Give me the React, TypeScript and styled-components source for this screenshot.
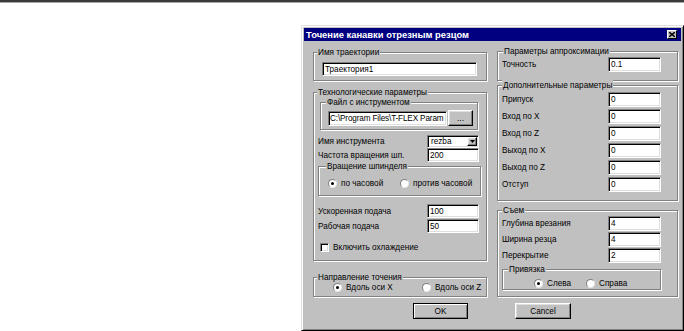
import React from "react";
import styled, { createGlobalStyle, css } from "styled-components";

const Global = createGlobalStyle`
  html, body { margin: 0; padding: 0; background: #fff; }
  body { font-family: "Liberation Sans", Arial, sans-serif; font-size: 8.2px; color: #000; }
  * { box-sizing: border-box; }
`;

const Page = styled.div`
  width: 684px;
  height: 331px;
  display: flex;
  flex-direction: column;
  overflow: hidden;
`;

const TopRule = styled.div`
  flex: none;
  height: 3px;
  border-top: 2px solid #3a3a3a;
  border-bottom: 1px solid #a8a8a8;
`;

const Window = styled.div`
  flex: none;
  margin: 22px 0 0 auto;
  width: 383px;
  height: 306px;
  background: #c0c0c0;
  border: 1px solid;
  border-color: #dfdfdf #000 #000 #dfdfdf;
  box-shadow: inset 1px 1px 0 #fff, inset -1px -1px 0 #808080;
  padding: 2px;
  display: flex;
  flex-direction: column;
`;

const TitleBar = styled.div`
  flex: none;
  height: 13px;
  background: #000080;
  display: flex;
  align-items: center;
  justify-content: space-between;
  padding: 0 4px 0 2px;
`;

const TitleText = styled.span`
  color: #fff;
  font-weight: bold;
  font-size: 9.4px;
  line-height: 13px;
  white-space: nowrap;
`;

const CloseButton = styled.span`
  width: 10px;
  height: 9px;
  background: #c0c0c0;
  border: 1px solid;
  border-color: #fff #000 #000 #fff;
  display: flex;
  align-items: center;
  justify-content: center;
`;

const Body = styled.div`
  display: grid;
  grid-template-columns: 174px 181px;
  column-gap: 10px;
  padding-left: 9px;
  align-items: start;
`;

const Column = styled.div`
  display: flex;
  flex-direction: column;
`;

type BoxProps = { $mt?: number; $ml?: number; $mr?: number; $h: number };

const Group = styled.div<BoxProps>`
  flex: none;
  display: flex;
  flex-direction: column;
  height: ${(p) => p.$h}px;
  margin: ${(p) => p.$mt ?? 0}px ${(p) => p.$mr ?? 0}px 0 ${(p) => p.$ml ?? 0}px;
  border: 1px solid #808080;
  box-shadow: 1px 1px 0 #fff, inset 1px 1px 0 #fff;
`;

const GroupTitle = styled.span<{ $ml?: number }>`
  display: block;
  align-self: flex-start;
  margin: -6px 0 0 ${(p) => p.$ml ?? 3}px;
  padding: 0 1px;
  background: #c0c0c0;
  line-height: 11px;
  white-space: nowrap;
`;

const Row = styled.div<{ $mt?: number; $pl?: number; $pr?: number; $h?: number }>`
  flex: none;
  display: flex;
  align-items: center;
  justify-content: space-between;
  height: ${(p) => p.$h ?? 15}px;
  margin-top: ${(p) => p.$mt ?? 0}px;
  padding: 0 ${(p) => p.$pr ?? 0}px 0 ${(p) => p.$pl ?? 0}px;
`;

const InlineRow = styled(Row)`
  justify-content: flex-start;
`;

const Label = styled.span`
  white-space: nowrap;
  line-height: 11px;
`;

const sunken = css`
  background: #fff;
  border: 1px solid;
  border-color: #808080 #fff #fff #808080;
  box-shadow: inset 1px 1px 0 #000, inset -1px -1px 0 #dfdfdf;
`;

const Field = styled.div<{ $w: number; $h?: number; $tight?: boolean }>`
  ${sunken}
  flex: none;
  width: ${(p) => p.$w}px;
  height: ${(p) => p.$h ?? 15}px;
  padding: 0 ${(p) => (p.$tight ? 1 : 2)}px;
  letter-spacing: ${(p) => (p.$tight ? "-0.15px" : "0")};
  display: flex;
  align-items: center;
  white-space: nowrap;
  overflow: hidden;
  line-height: 11px;
`;

const Combo = styled.div`
  ${sunken}
  flex: none;
  width: 52px;
  height: 13px;
  display: flex;
  align-items: center;
  justify-content: space-between;
  padding: 0 1px 0 3px;
  line-height: 11px;
`;

const raised = css`
  background: #c0c0c0;
  border: 1px solid;
  border-color: #fff #000 #000 #fff;
  box-shadow: inset -1px -1px 0 #808080, inset 1px 1px 0 #dfdfdf;
`;

const ArrowButton = styled.span`
  ${raised}
  width: 10px;
  height: 9px;
  display: flex;
  align-items: center;
  justify-content: center;
`;

const SmallButton = styled.span`
  ${raised}
  flex: none;
  width: 25px;
  height: 16px;
  margin-left: 1px;
  display: flex;
  align-items: center;
  justify-content: center;
  line-height: 11px;
`;

const RadioItem = styled.span<{ $w?: number }>`
  display: flex;
  align-items: center;
  gap: 4px;
  width: ${(p) => (p.$w ? `${p.$w}px` : "auto")};
  flex: none;
  white-space: nowrap;
  line-height: 11px;
`;

const RadioDot = styled.span<{ $on?: boolean }>`
  flex: none;
  width: 9px;
  height: 9px;
  border-radius: 50%;
  background: #fff;
  border: 1px solid;
  border-color: #808080 #e8e8e8 #e8e8e8 #808080;
  display: flex;
  align-items: center;
  justify-content: center;
  ${(p) =>
    p.$on &&
    css`
      &::after {
        content: "";
        width: 3px;
        height: 3px;
        border-radius: 50%;
        background: #000;
      }
    `}
`;

const CheckBox = styled.span`
  ${sunken}
  flex: none;
  width: 9px;
  height: 9px;
  margin-right: 4px;
`;

const ButtonRow = styled.div`
  flex: none;
  display: flex;
  gap: 47px;
  margin-top: 6px;
  padding-left: 109px;
`;

const PushButton = styled.span<{ $w: number; $default?: boolean }>`
  flex: none;
  width: ${(p) => p.$w}px;
  height: 16px;
  background: #c0c0c0;
  border: 1px solid;
  border-color: ${(p) => (p.$default ? "#000" : "#fff #000 #000 #fff")};
  box-shadow: ${(p) =>
    p.$default
      ? "inset 1px 1px 0 #fff, inset -1px -1px 0 #808080"
      : "inset -1px -1px 0 #808080, inset 1px 1px 0 #dfdfdf"};
  display: flex;
  align-items: center;
  justify-content: center;
  line-height: 11px;
`;

const Radio = ({ on, w, children }: { on?: boolean; w?: number; children: React.ReactNode }) => (
  <RadioItem $w={w}>
    <RadioDot $on={on} />
    {children}
  </RadioItem>
);

const FieldRow = ({ label, value, mt }: { label: string; value: string; mt?: number }) => (
  <Row $mt={mt} $pl={4} $pr={16}>
    <Label>{label}</Label>
    <Field $w={53}>{value}</Field>
  </Row>
);

const LeftRow = ({ label, value, mt, h }: { label: string; value: string; mt?: number; h?: number }) => (
  <Row $mt={mt} $pl={4} $pr={7} $h={h ?? 14}>
    <Label>{label}</Label>
    <Field $w={52} $h={h ?? 14}>{value}</Field>
  </Row>
);

export default function App() {
  return (
    <>
      <Global />
      <Page>
        <TopRule />
        <Window>
          <TitleBar>
            <TitleText>Точение канавки отрезным резцом</TitleText>
            <CloseButton>
              <svg width="6" height="5" viewBox="0 0 6 5">
                <path d="M0 0 L6 5 M6 0 L0 5" stroke="#000" strokeWidth="1.4" />
              </svg>
            </CloseButton>
          </TitleBar>
          <Body>
            <Column>
              <Group $mt={11} $h={29}>
                <GroupTitle>Имя траектории</GroupTitle>
                <InlineRow $mt={4} $pl={8} $h={14}>
                  <Field $w={155} $h={14}>Траектория1</Field>
                </InlineRow>
              </Group>
              <Group $mt={11} $h={169}>
                <GroupTitle>Технологические параметры</GroupTitle>
                <Group $mt={4} $ml={6} $mr={8} $h={28}>
                  <GroupTitle $ml={5}>Файл с инструментом</GroupTitle>
                  <InlineRow $mt={2} $pl={7} $h={16}>
                    <Field $w={119} $tight>C:\Program Files\T-FLEX Param</Field>
                    <SmallButton>...</SmallButton>
                  </InlineRow>
                </Group>
                <Row $mt={5} $pl={4} $pr={7} $h={13}>
                  <Label>Имя инструмента</Label>
                  <Combo>
                    rezba
                    <ArrowButton>
                      <svg width="5" height="3" viewBox="0 0 5 3">
                        <path d="M0 0 H5 L2.5 3 Z" fill="#000" />
                      </svg>
                    </ArrowButton>
                  </Combo>
                </Row>
                <LeftRow label="Частота вращения шп." value="200" />
                <Group $mt={4} $ml={4} $mr={5} $h={30}>
                  <GroupTitle $ml={7}>Вращение шпинделя</GroupTitle>
                  <InlineRow $mt={6} $pl={9} $h={10}>
                    <Radio on w={72}>по часовой</Radio>
                    <Radio>против часовой</Radio>
                  </InlineRow>
                </Group>
                <LeftRow mt={8} label="Ускоренная подача" value="100" />
                <LeftRow mt={1} label="Рабочая подача" value="50" />
                <InlineRow $mt={10} $pl={6} $h={9}>
                  <CheckBox />
                  <Label>Включить охлаждение</Label>
                </InlineRow>
              </Group>
              <Group $mt={16} $h={20}>
                <GroupTitle>Направление точения</GroupTitle>
                <InlineRow $mt={-1} $pl={19} $h={10}>
                  <Radio on w={89}>Вдоль оси X</Radio>
                  <Radio>Вдоль оси Z</Radio>
                </InlineRow>
              </Group>
            </Column>
            <Column>
              <Group $mt={10} $h={30}>
                <GroupTitle $ml={5}>Параметры аппроксимации</GroupTitle>
                <FieldRow label="Точность" value="0.1" />
              </Group>
              <Group $mt={4} $h={116}>
                <GroupTitle $ml={4}>Дополнительные параметры</GroupTitle>
                <FieldRow mt={1} label="Припуск" value="0" />
                <FieldRow mt={2} label="Вход по X" value="0" />
                <FieldRow mt={2} label="Вход по Z" value="0" />
                <FieldRow mt={2} label="Выход по X" value="0" />
                <FieldRow mt={2} label="Выход по Z" value="0" />
                <FieldRow mt={2} label="Отступ" value="0" />
              </Group>
              <Group $mt={9} $h={87}>
                <GroupTitle $ml={4}>Съем</GroupTitle>
                <FieldRow label="Глубина врезания" value="4" />
                <FieldRow mt={1} label="Ширина резца" value="4" />
                <FieldRow mt={1} label="Перекрытие" value="2" />
                <Group $mt={6} $ml={4} $mr={16} $h={21}>
                  <GroupTitle $ml={5}>Привязка</GroupTitle>
                  <InlineRow $mt={3} $pl={31} $h={10}>
                    <Radio on w={52}>Слева</Radio>
                    <Radio>Справа</Radio>
                  </InlineRow>
                </Group>
              </Group>
            </Column>
          </Body>
          <ButtonRow>
            <PushButton $w={55} $default>OK</PushButton>
            <PushButton $w={56}>Cancel</PushButton>
          </ButtonRow>
        </Window>
      </Page>
    </>
  );
}
